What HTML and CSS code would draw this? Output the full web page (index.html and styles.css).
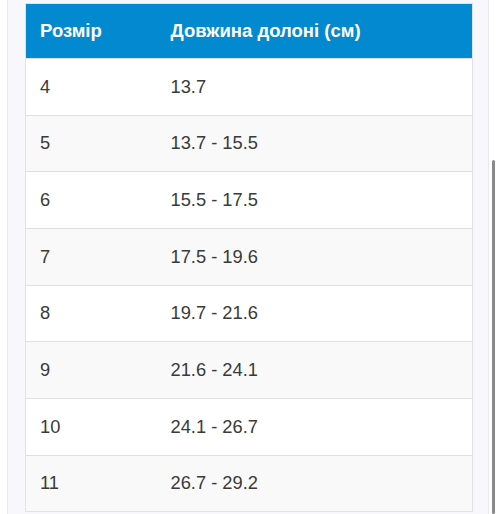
FILE: index.html
```html
<!DOCTYPE html>
<html lang="uk">
<head>
<meta charset="utf-8">
<title>Розмір</title>
<link rel="stylesheet" href="styles.css">
</head>
<body>
<div class="page">
  <div class="panel">
    <table class="sizes">
      <thead>
        <tr><th class="c1">Розмір</th><th>Довжина долоні (см)</th></tr>
      </thead>
      <tbody>
        <tr><td>4</td><td>13.7</td></tr>
        <tr><td>5</td><td>13.7 - 15.5</td></tr>
        <tr><td>6</td><td>15.5 - 17.5</td></tr>
        <tr><td>7</td><td>17.5 - 19.6</td></tr>
        <tr><td>8</td><td>19.7 - 21.6</td></tr>
        <tr><td>9</td><td>21.6 - 24.1</td></tr>
        <tr><td>10</td><td>24.1 - 26.7</td></tr>
        <tr><td>11</td><td>26.7 - 29.2</td></tr>
      </tbody>
    </table>
  </div>
  <div class="scrollbar"></div>
</div>
</body>
</html>
```

FILE: styles.css
```css
html, body {
  margin: 0;
  padding: 0;
  background: #ffffff;
  height: 514px;
  overflow: hidden;
}
.page {
  position: relative;
  height: 514px;
  font-family: "Liberation Sans", Arial, sans-serif;
}
.panel {
  margin-left: 7px;
  width: 482px;
  height: 514px;
  box-sizing: border-box;
  background: #f7f7fc;
  border-left: 1px solid #e8e8ee;
  border-right: 1px solid #e8e8ee;
  padding: 3px 17px 0 17px;
}
.sizes {
  width: 448px;
  border-collapse: collapse;
  table-layout: fixed;
  border: 1px solid #e2e2e2;
  background: #ffffff;
}
.sizes th {
  background: #0389cf;
  color: #ffffff;
  font-size: 18.5px;
  font-weight: bold;
  text-align: left;
  height: 55px;
  padding: 0 14px;
  box-sizing: border-box;
}
.sizes th.c1 {
  width: 131px;
}
.sizes td {
  height: 56.67px;
  padding: 0 14px;
  font-size: 18.3px;
  color: #3a3a3a;
  border-top: 1px solid #e0e0e0;
  box-sizing: border-box;
}
.sizes tbody tr:nth-child(even) td {
  background: #f9f9f9;
}
.scrollbar {
  position: absolute;
  left: 492px;
  top: 160px;
  width: 3px;
  height: 354px;
  border-radius: 2px;
  background: #8a8a8a;
}
```
